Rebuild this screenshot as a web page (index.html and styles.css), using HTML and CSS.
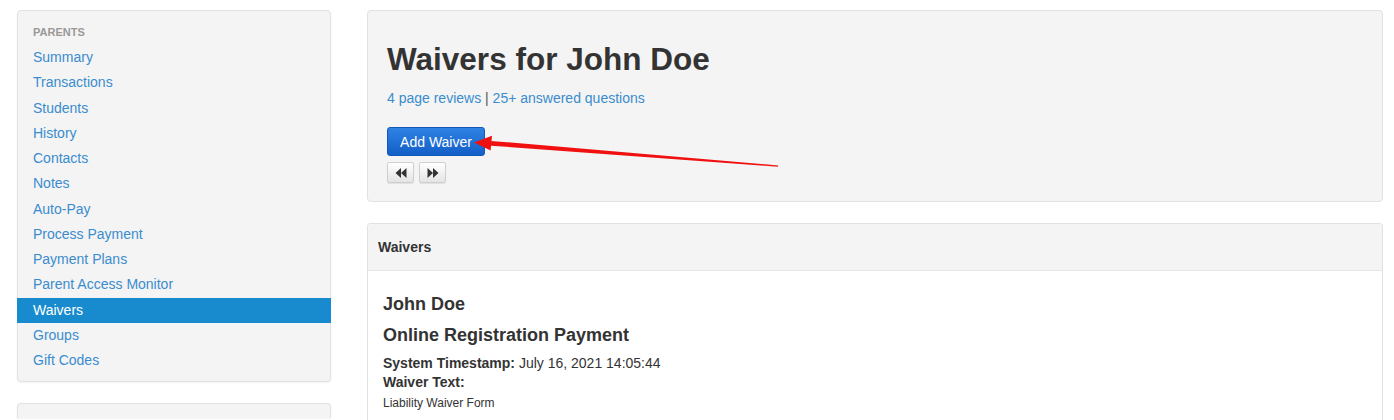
FILE: index.html
```html
<!DOCTYPE html>
<html>
<head>
<meta charset="utf-8">
<link rel="stylesheet" href="styles.css">
</head>
<body>
<div class="page">
  <aside class="sidebar">
    <nav class="side-panel">
      <div class="side-header">PARENTS</div>
      <a class="side-item" href="#">Summary</a>
      <a class="side-item" href="#">Transactions</a>
      <a class="side-item" href="#">Students</a>
      <a class="side-item" href="#">History</a>
      <a class="side-item" href="#">Contacts</a>
      <a class="side-item" href="#">Notes</a>
      <a class="side-item" href="#">Auto-Pay</a>
      <a class="side-item" href="#">Process Payment</a>
      <a class="side-item" href="#">Payment Plans</a>
      <a class="side-item" href="#">Parent Access Monitor</a>
      <a class="side-item active" href="#">Waivers</a>
      <a class="side-item" href="#">Groups</a>
      <a class="side-item" href="#">Gift Codes</a>
    </nav>
    <div class="side-panel second"></div>
  </aside>
  <main class="main">
    <section class="hero">
      <h1 class="title">Waivers for John Doe</h1>
      <div class="meta"><a href="#">4 page reviews</a> <span class="sep">|</span> <a href="#">25+ answered questions</a></div>
      <button class="btn-primary">Add Waiver</button>
      <div class="pager">
        <button class="btn-small" aria-label="Previous">
          <svg width="12" height="10" viewBox="0 0 12 10"><path d="M6 0 L0.5 5 L6 10 Z M11.5 0 L6 5 L11.5 10 Z" fill="#333"/></svg>
        </button>
        <button class="btn-small" aria-label="Next">
          <svg width="12" height="10" viewBox="0 0 12 10"><path d="M0.5 0 L6 5 L0.5 10 Z M6 0 L11.5 5 L6 10 Z" fill="#333"/></svg>
        </button>
      </div>
      <svg class="arrow" width="1016" height="192" viewBox="0 0 1016 192">
        <polygon points="124.2,130.9 411.1,155.4 410.9,156.7 123.8,135.7" fill="#f01010"/>
        <polygon points="107,132.5 125,125.8 123.6,140.6" fill="#f01010"/>
      </svg>
    </section>
    <section class="card">
      <div class="card-header">Waivers</div>
      <div class="card-body">
        <h3 class="name">John Doe</h3>
        <h4 class="form-title">Online Registration Payment</h4>
        <p class="info"><b>System Timestamp:</b> July 16, 2021 14:05:44<br><b>Waiver Text:</b></p>
        <p class="waiver-text">Liability Waiver Form</p>
      </div>
    </section>
  </main>
</div>
</body>
</html>
```

FILE: styles.css
```css
html, body {
  margin: 0;
  padding: 0;
  background: #ffffff;
}
body {
  font-family: "Liberation Sans", Arial, Helvetica, sans-serif;
  font-size: 14px;
  color: #333333;
  overflow: hidden;
  height: 420px;
}
a {
  color: #3a8ccf;
  text-decoration: none;
}
.page {
  display: grid;
  grid-template-columns: 314px 1fr;
  column-gap: 36px;
  padding: 10px 11px 0 17px;
}
.sidebar {
  display: flex;
  flex-direction: column;
  gap: 21px;
}
.side-panel {
  background: #f4f4f4;
  border: 1px solid #e2e2e2;
  border-radius: 4px;
  box-shadow: 0 1px 2px rgba(0,0,0,0.05);
  display: flex;
  flex-direction: column;
  padding: 13px 0 8px;
}
.side-panel.second {
  height: 14px;
  padding: 0;
  border-bottom: none;
  border-radius: 4px 4px 0 0;
}
.side-header {
  font-size: 11px;
  font-weight: bold;
  color: #999999;
  line-height: 16px;
  padding: 0 15px;
  margin-bottom: 5px;
}
.side-item {
  display: block;
  line-height: 25.25px;
  padding: 0 15px;
  font-size: 14px;
  color: #3a8ccf;
}
.side-item.active {
  background: #178bce;
  color: #ffffff;
  margin: 0 -1px;
  padding: 0 16px;
}
.main {
  display: flex;
  flex-direction: column;
  gap: 21px;
  min-width: 0;
}
.hero {
  position: relative;
  background: #f4f4f4;
  border: 1px solid #e2e2e2;
  border-radius: 4px;
  padding: 19px 19px 18px;
  display: flex;
  flex-direction: column;
  align-items: flex-start;
}
.title {
  margin: 11px 0 0;
  font-size: 31.5px;
  line-height: 36px;
  font-weight: bold;
  color: #333333;
}
.meta {
  margin-top: 11px;
  line-height: 20px;
  font-size: 14px;
}
.meta .sep {
  color: #555555;
}
.btn-primary {
  margin-top: 19px;
  height: 29px;
  width: 98px;
  padding: 0;
  border: 1px solid #1158b8;
  border-radius: 3px;
  background: linear-gradient(#2f82e4, #135fc8);
  color: #ffffff;
  font-family: "Liberation Sans", Arial, sans-serif;
  font-size: 14px;
}
.pager {
  display: flex;
  gap: 5px;
  margin-top: 6px;
}
.btn-small {
  width: 27px;
  height: 21px;
  padding: 0;
  border: 1px solid #cfcfcf;
  border-radius: 2px;
  background: linear-gradient(#ffffff, #e4e4e4);
  box-shadow: 0 1px 1px rgba(0,0,0,0.08);
  display: flex;
  align-items: center;
  justify-content: center;
}
.arrow {
  position: absolute;
  left: -1px;
  top: -1px;
  pointer-events: none;
}
.card {
  border: 1px solid #e2e2e2;
  border-bottom: none;
  border-radius: 4px 4px 0 0;
  background: #ffffff;
  height: 197px;
  overflow: hidden;
}
.card-header {
  background: #f4f4f4;
  border-bottom: 1px solid #e5e5e5;
  height: 46px;
  line-height: 46px;
  padding: 0 10px;
  font-weight: bold;
  font-size: 14px;
  color: #333333;
  border-radius: 4px 4px 0 0;
}
.card-body {
  padding: 22px 15px 0;
}
.name {
  margin: 0;
  font-size: 18px;
  line-height: 22px;
  font-weight: bold;
}
.form-title {
  margin: 9px 0 0;
  font-size: 18px;
  line-height: 22px;
  font-weight: bold;
}
.info {
  margin: 8px 0 0;
  line-height: 19px;
  font-size: 14px;
}
.waiver-text {
  margin: 3px 0 0;
  font-size: 12px;
  line-height: 17px;
}
```
